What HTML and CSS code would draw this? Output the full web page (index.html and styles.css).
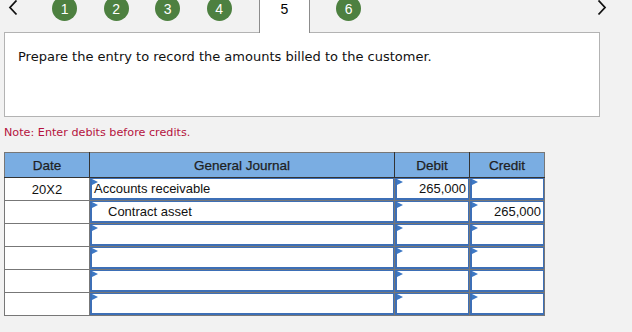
FILE: index.html
```html
<!DOCTYPE html>
<html>
<head>
<meta charset="utf-8">
<link rel="stylesheet" href="styles.css">
</head>
<body>
<nav class="steps">
  <span class="chev chev-left"><svg width="10" height="16" viewBox="0 0 10 16"><path d="M8.5 0.5 L2 7.5 L8.5 14.5" fill="none" stroke="#111" stroke-width="1.8"/></svg></span>
  <span class="step"><span class="dot">1</span></span>
  <span class="step"><span class="dot">2</span></span>
  <span class="step"><span class="dot">3</span></span>
  <span class="step"><span class="dot">4</span></span>
  <span class="tab">5</span>
  <span class="step step6"><span class="dot">6</span></span>
  <span class="spacer"></span>
  <span class="chev chev-right"><svg width="10" height="16" viewBox="0 0 10 16"><path d="M1.5 0.5 L8 7.5 L1.5 14.5" fill="none" stroke="#111" stroke-width="1.8"/></svg></span>
</nav>
<div class="prompt">Prepare the entry to record the amounts billed to the customer.</div>
<p class="note">Note: Enter debits before credits.</p>
<table class="journal">
  <colgroup><col class="c-date"><col class="c-acct"><col class="c-num"><col class="c-num"></colgroup>
  <thead>
    <tr><th>Date</th><th>General Journal</th><th>Debit</th><th>Credit</th></tr>
  </thead>
  <tbody>
    <tr><td class="date">20X2</td><td><div class="in">Accounts receivable</div></td><td><div class="in num">265,000</div></td><td><div class="in num"></div></td></tr>
    <tr><td class="date"></td><td><div class="in indent">Contract asset</div></td><td><div class="in num"></div></td><td><div class="in num">265,000</div></td></tr>
    <tr><td class="date"></td><td><div class="in"></div></td><td><div class="in num"></div></td><td><div class="in num"></div></td></tr>
    <tr><td class="date"></td><td><div class="in"></div></td><td><div class="in num"></div></td><td><div class="in num"></div></td></tr>
    <tr><td class="date"></td><td><div class="in"></div></td><td><div class="in num"></div></td><td><div class="in num"></div></td></tr>
    <tr><td class="date"></td><td><div class="in"></div></td><td><div class="in num"></div></td><td><div class="in num"></div></td></tr>
  </tbody>
</table>
</body>
</html>
```
FILE: styles.css
```css
html, body {
  margin: 0;
  padding: 0;
  background: #f2f2f2;
  overflow: hidden;
}
body {
  width: 632px;
  height: 332px;
  font-family: "Liberation Sans", Arial, sans-serif;
}
.steps {
  display: flex;
  align-items: flex-start;
  height: 32px;
  padding-left: 8px;
  position: relative;
  z-index: 1;
}
.chev {
  display: block;
  width: 10px;
  height: 16px;
}
.chev-left { margin-right: 21px; }
.chev-right { margin-right: 25px; }
.spacer { flex: 1; }
.step {
  width: 51.5px;
  display: flex;
  justify-content: center;
}
.dot {
  width: 25px;
  height: 25px;
  border-radius: 50%;
  background: #4d8040;
  color: #fff;
  font-size: 14px;
  line-height: 26px;
  text-align: center;
  margin-top: -4px;
}
.tab {
  margin-left: 14px;
  width: 49px;
  height: 33px;
  background: #fff;
  border-left: 1px solid #8c8c8c;
  border-right: 1px solid #8c8c8c;
  font-size: 14px;
  text-align: center;
  line-height: 19px;
  color: #000;
}
.step6 { margin-left: 13px; }
.prompt {
  margin-left: 4px;
  width: 581px;
  height: 67px;
  border: 1px solid #b3b3b3;
  background: #fff;
  padding: 16px 0 0 13px;
  font-family: "DejaVu Sans", Verdana, sans-serif;
  font-size: 13px;
  color: #111;
  line-height: 16px;
}
.note {
  margin: 8px 0 0 4px;
  height: 16px;
  font-family: "DejaVu Sans", Verdana, sans-serif;
  font-size: 11.2px;
  line-height: 16px;
  color: #b5123e;
}
.journal {
  margin: 11px 0 0 4px;
  border-collapse: collapse;
  table-layout: fixed;
  width: 540px;
  font-size: 13px;
  border: 1px solid #777;
}
.c-date { width: 85px; }
.c-acct { width: 305px; }
.c-num { width: 75px; }
.journal th {
  background: #7aade2;
  height: 24px;
  padding: 0;
  font-weight: normal;
  color: #1f1f1f;
  border: 1px solid #333;
  border-top-color: #777;
  font-size: 13.5px;
  -webkit-text-stroke: 0.25px #1f1f1f;
}
.journal th:first-child { border-left-color: #777; }
.journal th:last-child { border-right-color: #777; }
.journal td {
  height: 22px;
  padding: 0;
  border: 1px solid #777;
  background: #fff;
  color: #111;
}
.journal td.date { text-align: center; }
.in {
  position: relative;
  height: 19px;
  line-height: 19px;
  border: 1px solid #3d6fb6;
  border-bottom-width: 2px;
  border-left-width: 2px;
  padding: 0 2px;
  background: #fff;
  white-space: nowrap;
  overflow: hidden;
}
.in::before {
  content: "";
  position: absolute;
  left: 0;
  top: 0;
  border-left: 6px solid #3d78c4;
  border-top: 3px solid transparent;
  border-bottom: 3px solid transparent;
}
.in.num { text-align: right; }
.in.indent { padding-left: 16px; }
```
